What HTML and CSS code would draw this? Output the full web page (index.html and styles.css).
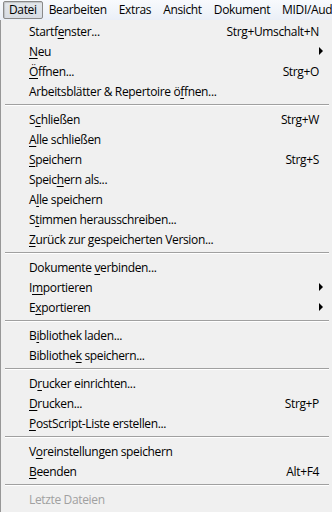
FILE: index.html
```html
<!DOCTYPE html>
<html lang="de">
<head>
    <meta charset="UTF-8">
    <title>Datei</title>
    <link rel="stylesheet" href="styles.css">
</head>
<body>
    <div class="menubar">
        <span class="top-item active">Datei</span>
        <span class="top-item">Bearbeiten</span>
        <span class="top-item">Extras</span>
        <span class="top-item">Ansicht</span>
        <span class="top-item">Dokument</span>
        <span class="top-item">MIDI/Audio</span>
    </div>

    <div class="menu">
        <div class="item"><span>Startf<u>e</u>nster...</span><span class="key">Strg+Umschalt+N</span></div>
        <div class="item"><span><u>N</u>eu</span><span class="arrow"></span></div>
        <div class="item"><span><u>Ö</u>ffnen...</span><span class="key">Strg+O</span></div>
        <div class="item"><span>Arbeitsblätter &amp; Repertoire ö<u>f</u>fnen...</span></div>
        <div class="sep"></div>
        <div class="item"><span>S<u>c</u>hließen</span><span class="key">Strg+W</span></div>
        <div class="item"><span><u>A</u>lle schließen</span></div>
        <div class="item"><span><u>S</u>peichern</span><span class="key">Strg+S</span></div>
        <div class="item"><span>Speic<u>h</u>ern als...</span></div>
        <div class="item"><span>A<u>l</u>le speichern</span></div>
        <div class="item"><span>S<u>t</u>immen herausschreiben...</span></div>
        <div class="item"><span><u>Z</u>urück zur gespeicherten Version...</span></div>
        <div class="sep"></div>
        <div class="item"><span>Dokumente <u>v</u>erbinden...</span></div>
        <div class="item"><span>I<u>m</u>portieren</span><span class="arrow"></span></div>
        <div class="item"><span>E<u>x</u>portieren</span><span class="arrow"></span></div>
        <div class="sep"></div>
        <div class="item"><span>B<u>i</u>bliothek laden...</span></div>
        <div class="item"><span>Bibliothe<u>k</u> speichern...</span></div>
        <div class="sep"></div>
        <div class="item"><span>D<u>r</u>ucker einrichten...</span></div>
        <div class="item"><span><u>D</u>rucken...</span><span class="key">Strg+P</span></div>
        <div class="item"><span><u>P</u>ostScript-Liste erstellen...</span></div>
        <div class="sep"></div>
        <div class="item"><span>V<u>o</u>reinstellungen speichern</span></div>
        <div class="item"><span><u>B</u>eenden</span><span class="key">Alt+F4</span></div>
        <div class="sep"></div>
        <div class="item disabled"><span>Letzte Dateien</span></div>
    </div>
</body>
</html>
```

FILE: styles.css
```css
body {
    margin: 0;
    padding: 0;
    width: 332px;
    height: 512px;
    overflow: hidden;
    background: #f0f0f0;
    font-family: 'Open Sans', 'Noto Sans', sans-serif;
    font-size: 12px;
    letter-spacing: -0.35px;
    color: #000;
}

.menubar {
    display: flex;
    height: 20px;
    padding-left: 3px;
    background: linear-gradient(#f8fafd, #eaeff7);
    white-space: nowrap;
    overflow: hidden;
}

.top-item {
    display: flex;
    align-items: center;
    flex-shrink: 0;
    height: 18px;
    margin-top: 1px;
    padding: 0 5px;
    border: 1px solid transparent;
    box-sizing: border-box;
    line-height: 16px;
}

.top-item.active {
    border-color: #8a8a8a;
    border-radius: 2px;
    background: linear-gradient(#e4e7eb, #d8dde4);
    box-shadow: inset 1px 1px 1px rgba(0, 0, 0, 0.15);
}

.menu {
    height: 492px;
    border-left: 1px solid #979797;
    box-sizing: border-box;
    padding-top: 1px;
    background: #f0f0f0;
}

.item {
    display: flex;
    justify-content: space-between;
    align-items: center;
    height: 20px;
    padding: 0 13px 0 28px;
    white-space: nowrap;
}

.item u {
    text-decoration: underline;
    text-underline-offset: 2px;
}

.key {
    margin-left: 20px;
}

.arrow {
    width: 0;
    height: 0;
    margin-right: -4px;
    border-top: 4px solid transparent;
    border-bottom: 4px solid transparent;
    border-left: 4px solid #000;
}

.disabled {
    color: #a0a0a0;
}

.sep {
    height: 8px;
    display: flex;
    align-items: center;
    padding: 0 3px 0 4px;
}

.sep::before {
    content: '';
    flex: 1;
    height: 1px;
    background: #a0a0a0;
    border-bottom: 1px solid #fff;
}
```
